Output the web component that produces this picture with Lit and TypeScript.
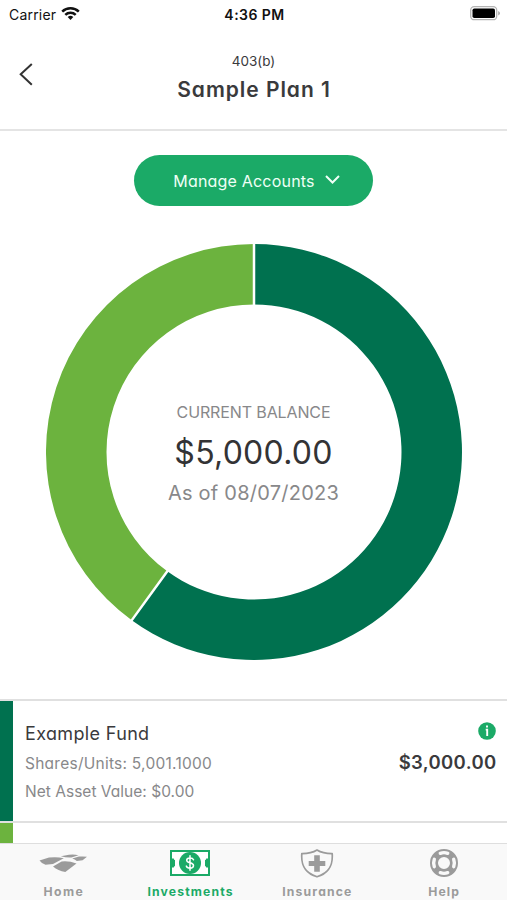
import { LitElement, html, svg, css } from "lit";
import { customElement } from "lit/decorators.js";

const CX = 208;
const OUTER = 208;
const INNER = 147.5;

const point = (r: number, turn: number) => {
  const a = turn * Math.PI * 2;
  return `${(CX + r * Math.sin(a)).toFixed(2)} ${(CX - r * Math.cos(a)).toFixed(2)}`;
};

const slice = (from: number, to: number) => {
  const large = to - from > 0.5 ? 1 : 0;
  return `M${point(OUTER, from)}A${OUTER} ${OUTER} 0 ${large} 1 ${point(OUTER, to)}L${point(INNER, to)}A${INNER} ${INNER} 0 ${large} 0 ${point(INNER, from)}Z`;
};

const homeIcon = svg`<svg width="48" height="18" viewBox="0 0 48 18" fill="#9b9b9b">
  <path d="M.5 6.500 10 3.600Q18 2.500 24.800 4.300L14 10 6.500 10.700Q2.500 9.500 .5 6.500Z"/>
  <path d="M21.800 2.200 30 .8Q35 .3 39.500 1.200L32.500 3.500Q27 3.800 21.800 2.200Z"/>
  <path d="M33.200 4.600 40 2.600Q44 2.200 48 2.700L43.600 6.300 37.800 6.900Q36 5.600 33.200 4.600Z"/>
  <path d="M14 12.500 22.600 7.500Q30 6.700 37.500 9.500L26.300 17.900Q19 16.800 14 12.500Z"/>
</svg>`;

const cashIcon = svg`<svg width="40" height="26" viewBox="0 0 40 26">
  <rect x="1" y="1" width="38" height="24" fill="#fff" stroke="#1baa67" stroke-width="2"/>
  <path d="M1 8.500H3.800Q3.800 10 5 10V16Q3.800 16 3.800 17.500H1ZM39 8.500H36.200Q36.200 10 35 10V16Q36.200 16 36.200 17.500H39Z" fill="#1baa67"/>
  <circle cx="20" cy="13" r="11" fill="#1baa67"/>
  <path d="M23.500 9.800Q22.800 7.900 20 7.900 16.700 7.900 16.700 10.300C16.700 13.600 23.500 12 23.500 15.500Q23.500 18.200 20 18.200 17 18.200 16.300 16.100M20 5.800V20.200" fill="none" stroke="#fff" stroke-width="1.500" stroke-linecap="round"/>
</svg>`;

const shieldIcon = svg`<svg width="34" height="29" viewBox="0 0 34 29">
  <path d="M17 1Q23 4.700 32.200 4.600C33 16 29.500 24 17 27.800 4.500 24 1 16 1.800 4.600Q11 4.700 17 1Z" fill="none" stroke="#9b9b9b" stroke-width="1.700" stroke-linejoin="round"/>
  <path d="M14.200 6.300h5.600v5.600h5.500v5.200h-5.500v5.600h-5.600v-5.600H8.700v-5.200h5.500Z" fill="#9b9b9b"/>
</svg>`;

const helpIcon = svg`<svg width="28" height="28" viewBox="0 0 28 28">
  <circle cx="14" cy="14" r="10" fill="none" stroke="#9b9b9b" stroke-width="8"/>
  <g fill="none" stroke="#f9f9f9" stroke-width="3.400" stroke-linecap="round">
    <path d="M10.300 4.300A10.400 10.400 0 0 1 17.700 4.300M23.700 10.300A10.400 10.400 0 0 1 23.700 17.700M17.700 23.700A10.400 10.400 0 0 1 10.300 23.700M4.300 17.700A10.400 10.400 0 0 1 4.300 10.300"/>
  </g>
</svg>`;

const tabs = [
  { label: "Home", icon: homeIcon, cls: "home" },
  { label: "Investments", icon: cashIcon, cls: "active" },
  { label: "Insurance", icon: shieldIcon, cls: "insurance" },
  { label: "Help", icon: helpIcon, cls: "help" },
];

@customElement("app-root")
export class AppRoot extends LitElement {
  static styles = css`
    :host { display: flex; flex-direction: column; height: 900px; overflow: hidden; background: #fff; color: #3a3a3c; font-family: Inter, "Liberation Sans", sans-serif; font-feature-settings: "cv11"; white-space: nowrap; }
    * { box-sizing: border-box; }
    svg { display: block; }
    .status { display: grid; grid-template-columns: 1fr auto 1fr; align-items: center; height: 28px; padding: 0 7px 0 9px; color: #111; font-feature-settings: normal; }
    .carrier { display: flex; align-items: center; gap: 5px; font-size: 14px; letter-spacing: 0.2px; }
    .carrier svg { margin-bottom: 2px; }
    .time { font-size: 14px; font-weight: 600; letter-spacing: 0.45px; }
    .battery { justify-self: end; margin-bottom: 1px; }
    .header { display: grid; grid-template-columns: 60px 1fr 60px; align-items: center; height: 102.5px; border-bottom: 2px solid #e4e4e4; }
    .back { padding: 0 0 8px 19px; }
    .titles { text-align: center; padding-top: 3px; }
    .kind { font-size: 13.5px; line-height: 20px; }
    .title { font-size: 21px; line-height: 37px; font-weight: 580; letter-spacing: 0.95px; padding-left: 1px; }
    .chart-area { display: flex; flex-direction: column; align-items: center; height: 568.5px; padding-top: 24px; }
    .manage { display: flex; align-items: center; justify-content: center; gap: 10px; width: 239px; height: 51.5px; padding: 1px 0 0 6px; border-radius: 26px; background: #1baa67; color: #effff6; font-size: 16px; letter-spacing: 0.2px; }
    .manage svg { margin-bottom: 3px; }
    .donut { display: grid; place-items: center; margin-top: 38.2px; }
    .donut > * { grid-area: 1 / 1; }
    .summary { display: flex; flex-direction: column; align-items: center; color: #88888a; padding-top: 2px; }
    .caption { font-size: 16px; line-height: 24px; letter-spacing: -0.12px; }
    .amount { font-size: 32px; line-height: 57px; color: #333335; letter-spacing: 0.25px; }
    .date { font-size: 20px; line-height: 25px; letter-spacing: 0.24px; }
    .row { display: flex; height: 121.5px; border-top: 2px solid #e0e0e0; }
    .row.next { flex: 1; height: auto; }
    .stripe { width: 13px; background: #00714f; }
    .next .stripe { background: #6cb33e; }
    .body { flex: 1; display: flex; justify-content: space-between; padding: 18px 10.5px 0 12px; }
    .fund { font-size: 18px; line-height: 29px; letter-spacing: 0.35px; margin-bottom: 2px; }
    .detail { font-size: 15.5px; line-height: 28px; color: #88888a; letter-spacing: 0.02px; }
    .shares { letter-spacing: 0.25px; }
    .right { display: flex; flex-direction: column; align-items: flex-end; padding-top: 3px; }
    .right svg { margin-right: 0.5px; }
    .value { font-size: 18.5px; font-weight: 600; line-height: 28px; margin-top: 8px; letter-spacing: 0.35px; }
    .tabs { display: grid; grid-template-columns: repeat(4, 1fr); height: 57.5px; border-top: 1.5px solid #dedede; background: #f9f9f9; }
    .tab { display: flex; flex-direction: column; align-items: center; color: #9b9b9b; }
    .icon { display: grid; place-items: center; height: 39px; }
    .home .icon { padding-bottom: 1px; }
    .label { font-size: 12.2px; line-height: 17px; font-weight: 700; letter-spacing: 1.15px; padding-left: 1px; }
    .home .label { letter-spacing: 1.4px; }
    .active { color: #1baa67; }
  `;

  render() {
    return html`
      <div class="status">
        <div class="carrier"><span>Carrier</span>
          <svg width="19" height="15" viewBox="0 0 19 15"><g fill="none" stroke="#111" stroke-width="2.500"><path d="M1.200 5.600A11.800 11.800 0 0 1 17.800 5.600"/><path d="M4.300 8.800A7.400 7.400 0 0 1 14.700 8.800"/></g><path d="M6.700 11.100A4 4 0 0 1 12.300 11.100L9.500 14Z" fill="#111"/></svg>
        </div>
        <div class="time">4:36 PM</div>
        <svg class="battery" width="30" height="15" viewBox="0 0 30 15"><rect x=".7" y=".7" width="26" height="13" rx="3.500" fill="#fff" stroke="#b4b4b4" stroke-width="1.300"/><rect x="2.500" y="2.500" width="22.500" height="9.500" rx="1.800" fill="#000"/><path d="M28.200 5v4.600Q30 8.800 30 7.300T28.200 5" fill="#aaa"/></svg>
      </div>
      <header class="header">
        <div class="back"><svg width="14" height="23" viewBox="0 0 14 23"><path d="M12.800 1 1.700 11.300 12.800 21.700" fill="none" stroke="#333" stroke-width="2"/></svg></div>
        <div class="titles"><div class="kind">403(b)</div><div class="title">Sample Plan 1</div></div>
      </header>
      <main class="chart-area">
        <div class="manage"><span>Manage Accounts</span><svg width="15" height="9" viewBox="0 0 15 9"><path d="M1 1 7.500 7.500 14 1" fill="none" stroke="#effff6" stroke-width="2"/></svg></div>
        <div class="donut">
          <svg width="416" height="416" viewBox="0 0 416 416">
            <path d=${slice(0, 0.6)} fill="#00714f"/><path d=${slice(0.6, 1)} fill="#6cb33e"/>
            <path d=${`M${point(210, 0)}L${point(145, 0)}M${point(210, 0.6)}L${point(145, 0.6)}`} stroke="#fff" stroke-width="2.500"/>
          </svg>
          <div class="summary"><div class="caption">CURRENT BALANCE</div><div class="amount">$5,000.00</div><div class="date">As of 08/07/2023</div></div>
        </div>
      </main>
      <section class="row"><div class="stripe"></div>
        <div class="body">
          <div><div class="fund">Example Fund</div><div class="detail shares">Shares/Units: 5,001.1000</div><div class="detail">Net Asset Value: $0.00</div></div>
          <div class="right"><svg width="18" height="18" viewBox="0 0 18 18"><circle cx="9" cy="9" r="8.800" fill="#1baa67"/><path d="M9 3.500v2M7.700 7.600H9.200V14" fill="none" stroke="#fff" stroke-width="1.900"/></svg><div class="value">$3,000.00</div></div>
        </div>
      </section>
      <section class="row next"><div class="stripe"></div></section>
      <nav class="tabs">${tabs.map((t) => html`<div class="tab ${t.cls}"><div class="icon">${t.icon}</div><div class="label">${t.label}</div></div>`)}</nav>
    `;
  }
}
